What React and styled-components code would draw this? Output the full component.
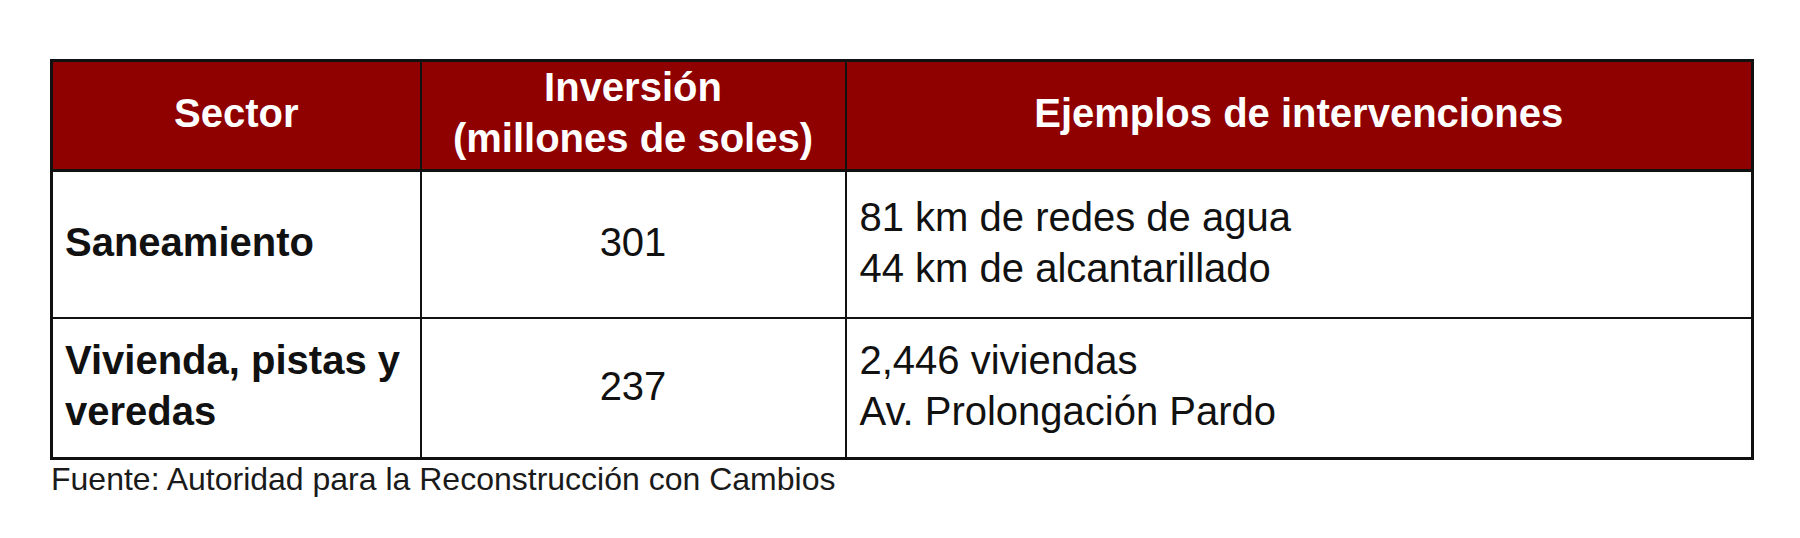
import React from 'react'
import styled, { createGlobalStyle } from 'styled-components'

const GlobalStyle = createGlobalStyle`
  html, body {
    margin: 0;
    padding: 0;
    background: #fff;
  }
  body {
    font-family: 'Liberation Sans', Arial, sans-serif;
    color: #111;
  }
`

const rows = [
  {
    sector: ['Saneamiento'],
    amount: '301',
    examples: ['81 km de redes de agua', '44 km de alcantarillado'],
    height: 147,
  },
  {
    sector: ['Vivienda, pistas y', 'veredas'],
    amount: '237',
    examples: ['2,446 viviendas', 'Av. Prolongación Pardo'],
    height: 141,
  },
]

export default function App() {
  return (
    <>
      <GlobalStyle />
      <Page>
        <Figure>
          <Table>
            <colgroup>
              <col style={{ width: 369 }} />
              <col style={{ width: 425 }} />
              <col style={{ width: 907 }} />
            </colgroup>
            <thead>
              <Row $height={109}>
                <HeadCell>Sector</HeadCell>
                <HeadCell>
                  Inversión
                  <br />
                  (millones de soles)
                </HeadCell>
                <HeadCell>Ejemplos de intervenciones</HeadCell>
              </Row>
            </thead>
            <tbody>
              {rows.map((r) => (
                <Row key={r.amount} $height={r.height}>
                  <SectorCell>
                    {r.sector.map((line, i) => (
                      <React.Fragment key={line}>
                        {i > 0 && <br />}
                        {line}
                      </React.Fragment>
                    ))}
                  </SectorCell>
                  <AmountCell>{r.amount}</AmountCell>
                  <ExampleCell>
                    {r.examples.map((line) => (
                      <Line key={line}>{line}</Line>
                    ))}
                  </ExampleCell>
                </Row>
              ))}
            </tbody>
          </Table>
          <Source>Fuente: Autoridad para la Reconstrucción con Cambios</Source>
        </Figure>
      </Page>
    </>
  )
}

const Page = styled.main`
  padding: 59px 0 0 50px;
`

const Figure = styled.figure`
  margin: 0;
  width: 1701px;
`

const Table = styled.table`
  width: 1701px;
  table-layout: fixed;
  border-collapse: collapse;
  border: 3px solid #111;
  font-size: 40px;
  line-height: 51px;
`

const Row = styled.tr`
  height: ${(p) => p.$height}px;
`

const HeadCell = styled.th`
  background: #8f0000;
  color: #fff;
  font-weight: 700;
  text-align: center;
  vertical-align: middle;
  padding: 0 6px 5px;
  border: 2px solid #111;
  border-bottom-width: 3px;
`

const BodyCell = styled.td`
  border: 2px solid #111;
  vertical-align: middle;
  padding: 0 12px 3px;
`

const SectorCell = styled(BodyCell)`
  font-weight: 700;
  text-align: left;
`

const AmountCell = styled(BodyCell)`
  text-align: center;
`

const ExampleCell = styled(BodyCell)`
  text-align: left;
  padding-left: 13px;
`

const Line = styled.div``

const Source = styled.figcaption`
  font-size: 32px;
  line-height: 37px;
  color: #1a1a1a;
  margin-top: 1px;
  padding-left: 1px;
`
